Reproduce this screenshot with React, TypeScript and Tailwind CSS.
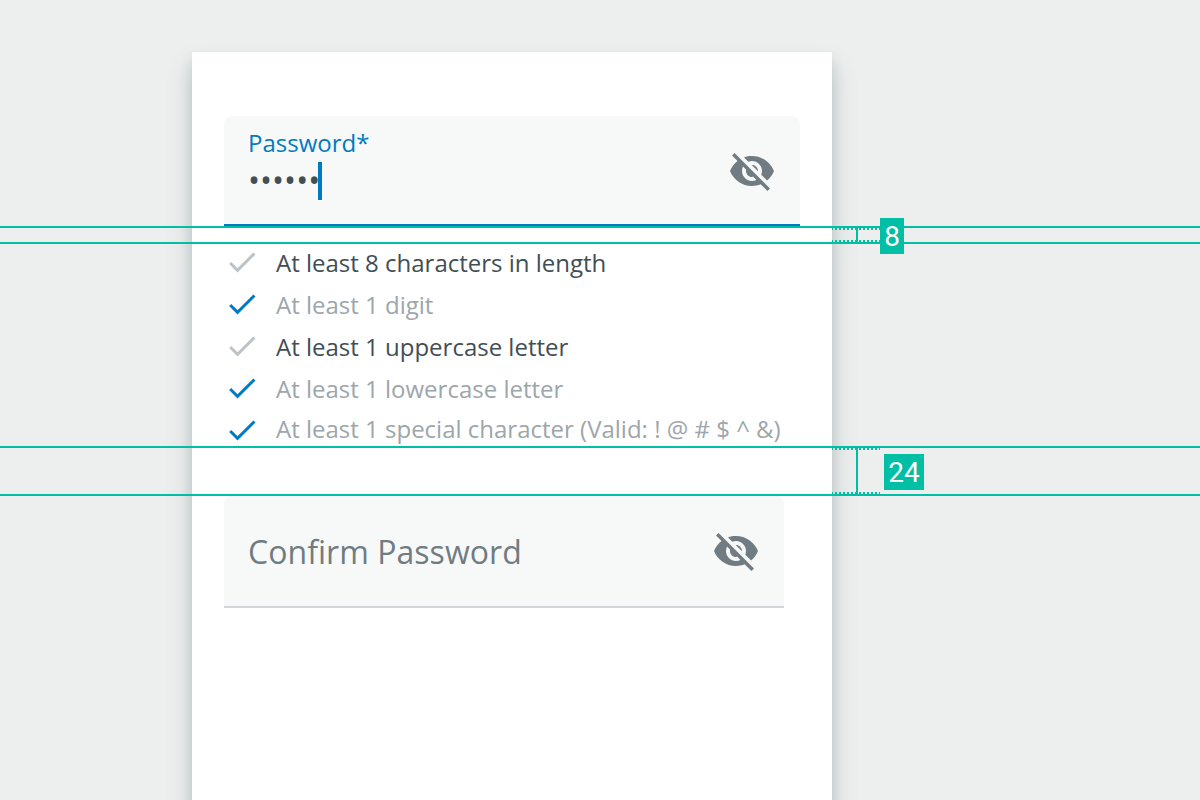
import { MdVisibilityOff } from "react-icons/md";

function Check({ done }: { done: boolean }) {
  return (
    <svg
      viewBox="0 0 24 24"
      className={`size-9 shrink-0 ${done ? "fill-[#007bc1]" : "fill-[#bdc2c6]"}`}
    >
      <path d="M9 16.17 4.83 12l-1.42 1.41L9 19 21 7l-1.41-1.41z" />
    </svg>
  );
}

const rules = [
  { text: "At least 8 characters in length", done: false },
  { text: "At least 1 digit", done: true },
  { text: "At least 1 uppercase letter", done: false },
  { text: "At least 1 lowercase letter", done: true },
  { text: "At least 1 special character (Valid: ! @ # $ ^ &)", done: true },
];

function Measure({ className, tagClass, label }: { className: string; tagClass: string; label: string }) {
  const dots =
    "absolute left-[832px] w-12 h-0.5 bg-[linear-gradient(90deg,#00bfa5_0_1px,transparent_1px_3px,#00bfa5_3px_4px)] bg-[length:4px_2px]";
  return (
    <div className={`absolute inset-x-0 border-y-2 border-[#00bfa5] ${className}`}>
      <div className={`${dots} top-0`} />
      <div className={`${dots} bottom-0`} />
      <div className="absolute inset-y-0 left-[856px] w-0.5 bg-[#00bfa5]" />
      <div
        className={`absolute flex h-9 items-center justify-center bg-[#00bfa5] pt-0.5 font-[Roboto,sans-serif] text-[28px] leading-[34px] text-white ${tagClass}`}
      >
        {label}
      </div>
    </div>
  );
}

export default function App() {
  return (
    <div className="relative h-[800px] w-[1200px] overflow-hidden bg-[#edefee] pl-48 pt-[52px] font-['Open_Sans',sans-serif]">
      <main className="h-[800px] w-[640px] bg-white px-8 pt-16 shadow-[0_16px_24px_rgba(56,78,92,0.22),0_8px_12px_rgba(56,78,92,0.16)]">
        <div className="flex h-[110px] w-[576px] items-start justify-between rounded-t-lg border-b-2 border-[#007bc1] bg-[#f7f9f8] pl-6 pr-6">
          <div>
            <div className="mt-[11px] text-2xl leading-8 text-[#007bc1]">Password*</div>
            <div className="mt-[3px] flex h-[38px] items-center">
              <span className="w-[70px] pb-0.5 text-[32px] leading-9 text-[#424e54]">••••••</span>
              <span className="h-[38px] w-1 bg-[#007bc1]" />
            </div>
          </div>
          <MdVisibilityOff className="mt-[31px] size-12 text-[#717c82]" />
        </div>

        <ul className="mt-[18px] flex h-[202px] flex-col gap-1.5 text-2xl">
          {rules.map((r, i) => (
            <li key={r.text} className="flex h-9 shrink-0 items-center gap-4">
              <Check done={r.done} />
              <span
                className={`whitespace-nowrap leading-9 ${r.done ? "text-[#9da6ab]" : "text-[#424e54]"} ${i === 4 ? "-mt-0.5" : "pt-0.5"}`}
              >
                {r.text}
              </span>
            </li>
          ))}
        </ul>

        <div className="mt-[50px] flex h-28 w-[560px] items-center justify-between rounded-t-lg border-b-2 border-[#d3d7da] bg-[#f7f9f8] px-6">
          <span className="pt-0.5 text-[32px] leading-10 tracking-[0.04px] text-[#717c82]">Confirm Password</span>
          <MdVisibilityOff className="size-12 text-[#717c82]" />
        </div>
      </main>

      <Measure className="top-[226px] h-[18px]" tagClass="left-[880px] -top-2.5 w-6" label="8" />
      <Measure className="top-[446px] h-[50px]" tagClass="left-[884px] top-1.5 w-10" label="24" />
    </div>
  );
}
